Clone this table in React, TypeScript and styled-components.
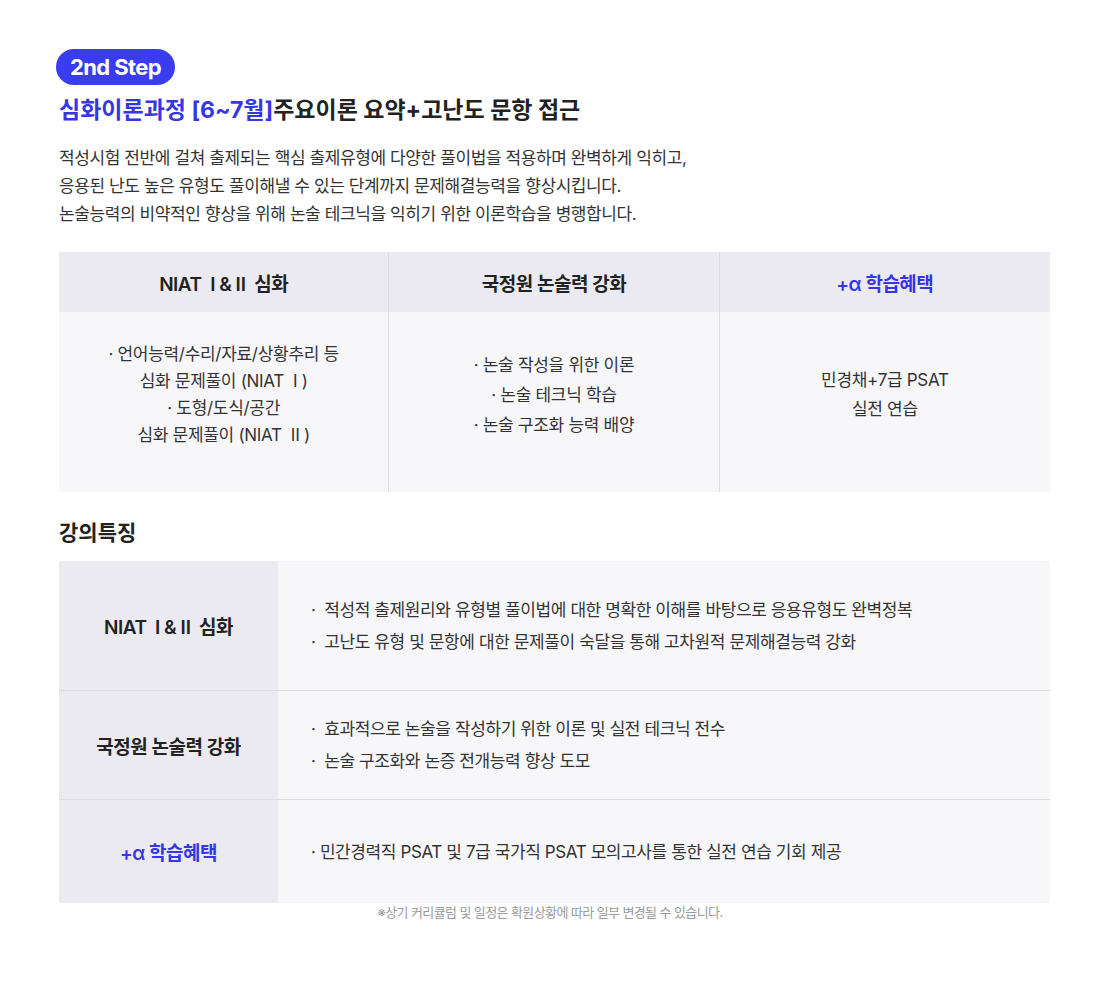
import styled, { createGlobalStyle } from "styled-components";

const GlobalStyle = createGlobalStyle`
  body {
    margin: 0;
    background: #fff;
    font-family: Inter, "Noto Sans CJK KR", sans-serif;
    color: #222;
  }
  * { box-sizing: border-box; }
`;

const Page = styled.div`
  width: 1100px;
  height: 981px;
  padding: 49px 50px 0 59px;
`;

const Badge = styled.div`
  display: inline-flex;
  align-items: center;
  justify-content: center;
  height: 36px;
  padding: 0 14px;
  margin-left: -3px;
  border-radius: 18px;
  background: #3a3cef;
  color: #fff;
  font-size: 22px;
  font-weight: 700;
  letter-spacing: -0.6px;
`;

const Title = styled.h2`
  margin: 10px 0 0;
  font-size: 23px;
  line-height: 30px;
  font-weight: 700;
  letter-spacing: 0;
  color: #222;
`;

const Accent = styled.span`
  color: #3536e6;
`;

const Desc = styled.p`
  margin: 19px 0 0;
  font-size: 17px;
  line-height: 28px;
  letter-spacing: -0.4px;
  color: #333;
`;

const StepTable = styled.div`
  margin-top: 24px;
  width: 991px;
  display: grid;
  grid-template-columns: repeat(3, 1fr);
  grid-template-rows: 60px 180px;
`;

const HeadCell = styled.div<{ $blue?: boolean; $last?: boolean }>`
  display: flex;
  align-items: center;
  justify-content: center;
  background: #eaeaf0;
  border-right: ${(p) => (p.$last ? "none" : "1px solid #dcdce2")};
  font-size: 19px;
  font-weight: 600;
  letter-spacing: -0.5px;
  color: ${(p) => (p.$blue ? "#3536e6" : "#222")};
  white-space: pre;
`;

const BodyCell = styled.div<{ $lh: number; $last?: boolean }>`
  display: flex;
  flex-direction: column;
  align-items: center;
  justify-content: center;
  padding-bottom: 14px;
  background: #f7f7fa;
  border-right: ${(p) => (p.$last ? "none" : "1px solid #dcdce2")};
  font-size: 17px;
  line-height: ${(p) => p.$lh}px;
  letter-spacing: -0.3px;
  color: #333;
  text-align: center;
  white-space: pre;
`;

const SectionTitle = styled.h3`
  margin: 27px 0 0;
  font-size: 21px;
  line-height: 28px;
  font-weight: 700;
  letter-spacing: 0;
  color: #222;
`;

const FeatureTable = styled.div`
  margin-top: 14px;
  width: 991px;
  display: flex;
  flex-direction: column;
`;

const FeatureRow = styled.div<{ $h: number; $last?: boolean }>`
  display: grid;
  grid-template-columns: 219px 1fr;
  height: ${(p) => p.$h}px;
  border-bottom: ${(p) => (p.$last ? "none" : "1px solid #dcdce2")};
`;

const FeatureLabel = styled.div<{ $blue?: boolean }>`
  display: flex;
  align-items: center;
  justify-content: center;
  background: #eaeaf0;
  font-size: 19px;
  font-weight: 600;
  letter-spacing: -0.5px;
  color: ${(p) => (p.$blue ? "#3536e6" : "#222")};
  white-space: pre;
`;

const FeatureBody = styled.div`
  display: flex;
  flex-direction: column;
  justify-content: center;
  padding: 0 0 0 33px;
  background: #f7f7fa;
  font-size: 17px;
  line-height: 32px;
  letter-spacing: -0.4px;
  color: #333;
  white-space: pre;
`;

const Note = styled.p`
  margin: 0;
  margin-left: -59px;
  width: 1100px;
  text-align: center;
  font-size: 13px;
  line-height: 18px;
  letter-spacing: -0.6px;
  color: #9a9a9a;
`;

const features = [
  {
    label: "NIAT  Ⅰ & Ⅱ  심화",
    h: 130,
    lines: [
      "·  적성적 출제원리와 유형별 풀이법에 대한 명확한 이해를 바탕으로 응용유형도 완벽정복",
      "·  고난도 유형 및 문항에 대한 문제풀이 숙달을 통해 고차원적 문제해결능력 강화",
    ],
  },
  {
    label: "국정원 논술력 강화",
    h: 109,
    lines: [
      "·  효과적으로 논술을 작성하기 위한 이론 및 실전 테크닉 전수",
      "·  논술 구조화와 논증 전개능력 향상 도모",
    ],
  },
  {
    label: "+α 학습혜택",
    h: 103,
    blue: true,
    lines: ["· 민간경력직 PSAT 및 7급 국가직 PSAT 모의고사를 통한 실전 연습 기회 제공"],
  },
];

function App() {
  return (
    <>
      <GlobalStyle />
      <Page>
        <Badge>2nd Step</Badge>
        <Title>
          <Accent>심화이론과정 [6~7월]</Accent>주요이론 요약+고난도 문항 접근
        </Title>
        <Desc>
          적성시험 전반에 걸쳐 출제되는 핵심 출제유형에 다양한 풀이법을 적용하며 완벽하게 익히고,
          <br />
          응용된 난도 높은 유형도 풀이해낼 수 있는 단계까지 문제해결능력을 향상시킵니다.
          <br />
          논술능력의 비약적인 향상을 위해 논술 테크닉을 익히기 위한 이론학습을 병행합니다.
        </Desc>

        <StepTable>
          <HeadCell>NIAT  Ⅰ & Ⅱ  심화</HeadCell>
          <HeadCell>국정원 논술력 강화</HeadCell>
          <HeadCell $blue $last>+α 학습혜택</HeadCell>
          <BodyCell $lh={27}>
            {"· 언어능력/수리/자료/상황추리 등\n심화 문제풀이 (NIAT  Ⅰ )\n· 도형/도식/공간\n심화 문제풀이 (NIAT  Ⅱ )"}
          </BodyCell>
          <BodyCell $lh={30}>
            {"· 논술 작성을 위한 이론\n· 논술 테크닉 학습\n· 논술 구조화 능력 배양"}
          </BodyCell>
          <BodyCell $lh={29} $last>
            {"민경채+7급 PSAT\n실전 연습"}
          </BodyCell>
        </StepTable>

        <SectionTitle>강의특징</SectionTitle>
        <FeatureTable>
          {features.map((f, i) => (
            <FeatureRow key={f.label} $h={f.h} $last={i === features.length - 1}>
              <FeatureLabel $blue={f.blue}>{f.label}</FeatureLabel>
              <FeatureBody>
                {f.lines.map((l) => (
                  <div key={l}>{l}</div>
                ))}
              </FeatureBody>
            </FeatureRow>
          ))}
        </FeatureTable>
        <Note>※상기 커리큘럼 및 일정은 확원상황에 따라 일부 변경될 수 있습니다.</Note>
      </Page>
    </>
  );
}

export default App;
